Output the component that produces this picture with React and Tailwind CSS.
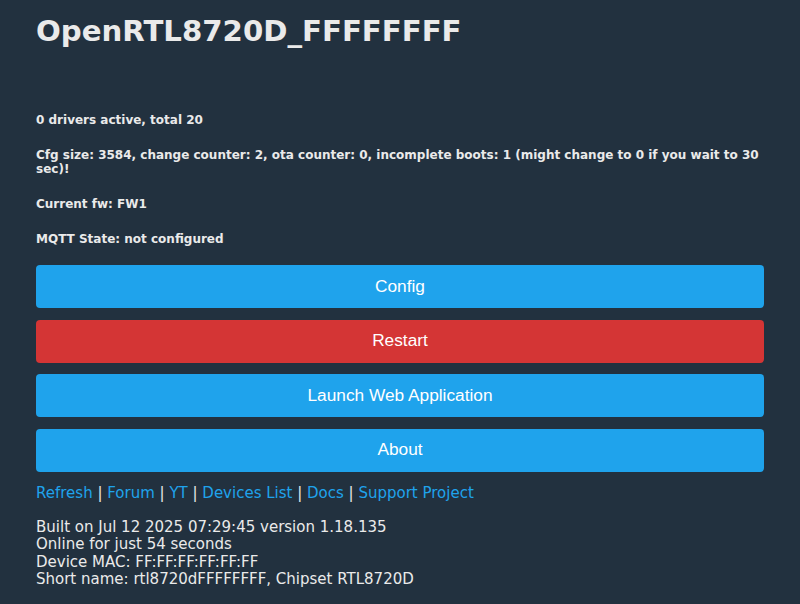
import React from "react";

const info = [
  "0 drivers active, total 20",
  "Cfg size: 3584, change counter: 2, ota counter: 0, incomplete boots: 1 (might change to 0 if you wait to 30 sec)!",
  "Current fw: FW1",
  "MQTT State: not configured",
];

const buttons = [
  { label: "Config", color: "bg-[#1fa3ec]" },
  { label: "Restart", color: "bg-[#d43535]" },
  { label: "Launch Web Application", color: "bg-[#1fa3ec]" },
  { label: "About", color: "bg-[#1fa3ec]" },
];

const links = ["Refresh", "Forum", "YT", "Devices List", "Docs", "Support Project"];

const App = () => {
  return (
    <div className="min-h-[604px] bg-[#22313f] text-[#eaeaea] font-['DejaVu_Sans',Verdana,sans-serif]">
      <div className="px-[36px] pt-[14px]">
        <h1 className="text-[29.2px] font-bold leading-[34px]">OpenRTL8720D_FFFFFFFF</h1>

        <div className="mt-[65px] flex flex-col gap-[21px] text-[12px] font-bold leading-[14px]">
          {info.map((line) => (
            <p key={line}>{line}</p>
          ))}
        </div>

        <div className="mt-[19px] flex flex-col gap-[11.5px] font-['Liberation_Sans',Arial,sans-serif]">
          {buttons.map((b) => (
            <div
              key={b.label}
              className={`h-[43px] flex items-center justify-center rounded-[4px] text-[17.3px] text-white ${b.color}`}
            >
              {b.label}
            </div>
          ))}
        </div>

        <div className="mt-[12px] text-[15px] leading-[18px]">
          {links.map((l, i) => (
            <span key={l}>
              {i > 0 && <span className="text-[#eaeaea]"> | </span>}
              <span className="text-[#1fa3ec]">{l}</span>
            </span>
          ))}
        </div>

        <div className="mt-[17px] text-[15px] leading-[17.5px]">
          <div>Built on Jul 12 2025 07:29:45 version 1.18.135</div>
          <div>Online for just 54 seconds</div>
          <div>Device MAC: FF:FF:FF:FF:FF:FF</div>
          <div>Short name: rtl8720dFFFFFFFF, Chipset RTL8720D</div>
        </div>
      </div>
    </div>
  );
};

export default App;
